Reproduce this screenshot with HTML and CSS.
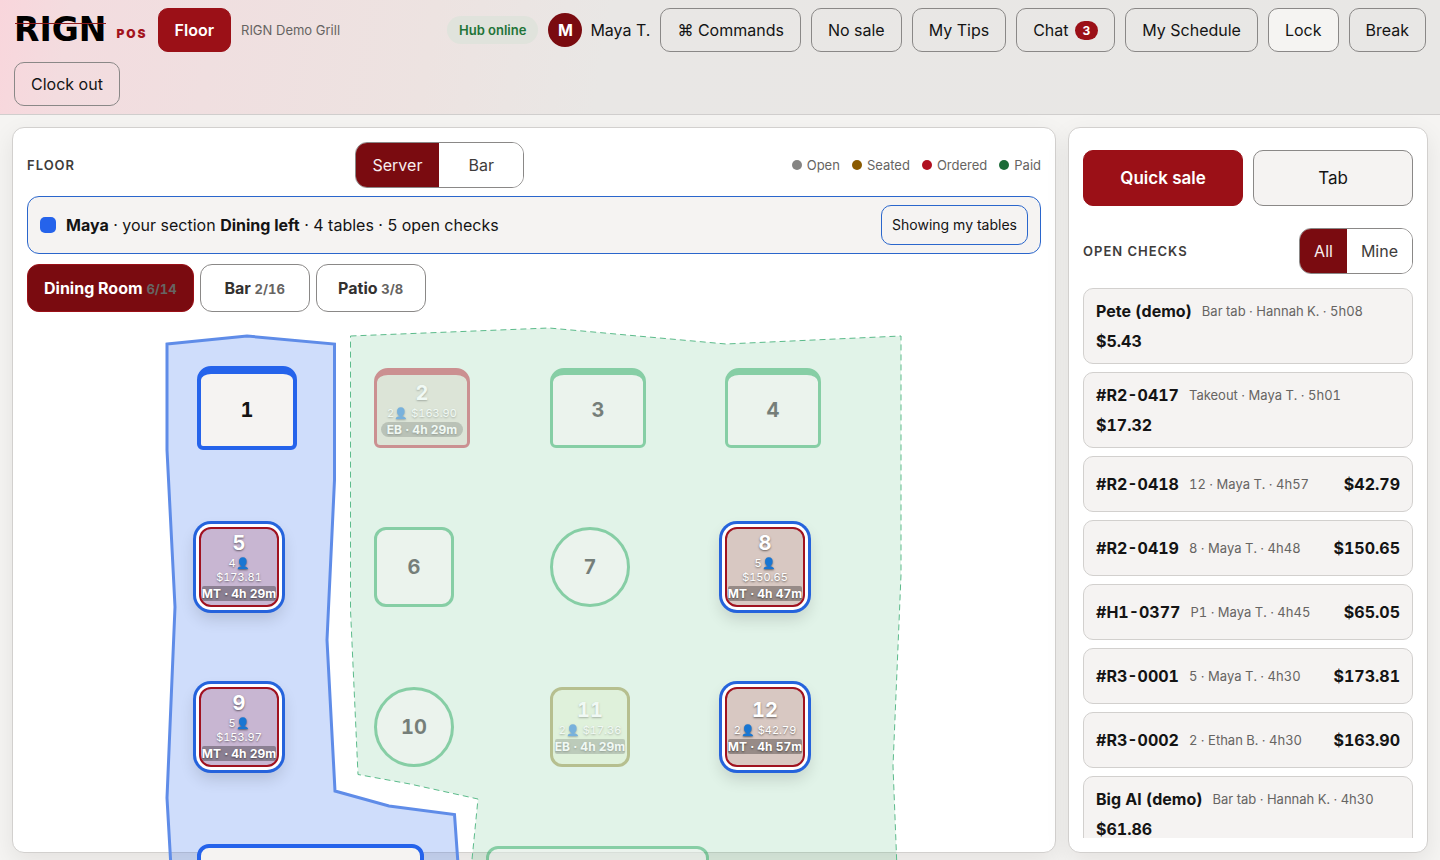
FILE: index.html
```html
<!DOCTYPE html>
<html lang="en">
<head>
<meta charset="utf-8">
<title>RIGN POS</title>
<link rel="stylesheet" href="styles.css">
</head>
<body>
<header class="topbar">
  <div class="brand"><span class="brand-word">RIGN</span><span class="brand-sub">POS</span></div>
  <button class="btn btn-primary">Floor</button>
  <span class="venue">RIGN Demo Grill</span>
  <span class="hub">Hub online</span>
  <div class="user"><span class="avatar">M</span><span>Maya T.</span></div>
  <button class="btn">⌘ Commands</button>
  <button class="btn">No sale</button>
  <button class="btn">My Tips</button>
  <button class="btn">Chat <span class="count">3</span></button>
  <button class="btn">My Schedule</button>
  <button class="btn btn-solid">Lock</button>
  <button class="btn">Break</button>
  <button class="btn">Clock out</button>
</header>
<main class="layout">
  <section class="panel floor">
    <div class="floor-head">
      <h2 class="heading">Floor</h2>
      <div class="segment segment-even"><button class="seg on">Server</button><button class="seg">Bar</button></div>
      <ul class="legend">
        <li><i class="dot dot-open"></i>Open</li>
        <li><i class="dot dot-seated"></i>Seated</li>
        <li><i class="dot dot-ordered"></i>Ordered</li>
        <li><i class="dot dot-paid"></i>Paid</li>
      </ul>
    </div>
    <div class="banner">
      <i class="swatch"></i>
      <p class="banner-text"><b>Maya</b> · your section <b>Dining left</b> · 4 tables · 5 open checks</p>
      <button class="btn-filter">Showing my tables</button>
    </div>
    <nav class="rooms">
      <button class="room on">Dining Room <small>6/14</small></button>
      <button class="room">Bar <small>2/16</small></button>
      <button class="room">Patio <small>3/8</small></button>
    </nav>
    <div class="stage">
      <svg class="zones" viewBox="0 0 740 600" aria-hidden="true">
        <path class="zone-mine" d="M3 24 83 16 170.500 24V160L163 320 171 471 225 486 290.500 494.500 298 600H10L3 478 11 287 3 130Z"/>
        <path class="zone-other" d="M186.500 16 385 8 562 24 737 16V255L729 446 735 600H302L314 479 246 464 194 454.500 186.500 290Z"/>
      </svg>
      <button class="table booth mine t1"><b class="num">1</b></button>
      <button class="table booth dim ordered t2"><b class="num">2</b><span class="info">2👤 $163.90</span><span class="timer">EB · 4h 29m</span></button>
      <button class="table booth dim t3"><b class="num">3</b></button>
      <button class="table booth dim t4"><b class="num">4</b></button>
      <button class="table busy violet t5"><b class="num">5</b><span class="info">4👤 $173.81</span><span class="timer">MT · 4h 29m</span></button>
      <button class="table dim t6"><b class="num">6</b></button>
      <button class="table round dim t7"><b class="num">7</b></button>
      <button class="table busy t8"><b class="num">8</b><span class="info">5👤 $150.65</span><span class="timer">MT · 4h 47m</span></button>
      <button class="table busy violet t9"><b class="num">9</b><span class="info">5👤 $153.97</span><span class="timer">MT · 4h 29m</span></button>
      <button class="table round dim t10"><b class="num">10</b></button>
      <button class="table dim seated t11"><b class="num">11</b><span class="info">2👤 $17.36</span><span class="timer">EB · 4h 29m</span></button>
      <button class="table busy t12"><b class="num">12</b><span class="info">2👤 $42.79</span><span class="timer">MT · 4h 57m</span></button>
      <button class="table mine t13" aria-label="Table 13"></button>
      <button class="table dim t14" aria-label="Table 14"></button>
    </div>
  </section>
  <aside class="panel side">
    <div class="actions"><button class="btn-big btn-primary">Quick sale</button><button class="btn-big">Tab</button></div>
    <div class="side-head">
      <h2 class="heading">Open checks</h2>
      <div class="segment segment-tight"><button class="seg on">All</button><button class="seg">Mine</button></div>
    </div>
    <div class="checks">
      <button class="check"><b>Pete (demo)</b><span class="meta">Bar tab · Hannah K. · 5h08</span><b>$5.43</b></button>
      <button class="check"><b>#R2-0417</b><span class="meta">Takeout · Maya T. · 5h01</span><b>$17.32</b></button>
      <button class="check"><b>#R2-0418</b><span class="meta">12 · Maya T. · 4h57</span><b>$42.79</b></button>
      <button class="check"><b>#R2-0419</b><span class="meta">8 · Maya T. · 4h48</span><b>$150.65</b></button>
      <button class="check"><b>#H1-0377</b><span class="meta">P1 · Maya T. · 4h45</span><b>$65.05</b></button>
      <button class="check"><b>#R3-0001</b><span class="meta">5 · Maya T. · 4h30</span><b>$173.81</b></button>
      <button class="check"><b>#R3-0002</b><span class="meta">2 · Ethan B. · 4h30</span><b>$163.90</b></button>
      <button class="check"><b>Big Al (demo)</b><span class="meta">Bar tab · Hannah K. · 4h30</span><b>$61.86</b></button>
    </div>
  </aside>
</main>
</body>
</html>
```
FILE: styles.css
```css
:root {
  --ink: #141414;
  --muted: #666462;
  --line: #8a8887;
  --soft-line: #d2d0ce;
  --surface: #f5f3f2;
  --red: #9b1017;
  --deep: #7a0b10;
  --blue: #2563eb;
  --green: #35ad68;
}
* { box-sizing: border-box; }
body {
  margin: 0;
  height: 100vh;
  overflow: hidden;
  display: flex;
  flex-direction: column;
  background: #f5f4f2;
  color: var(--ink);
  font: 16px/20px Inter, "Noto Sans", sans-serif;
}
button { font: inherit; color: inherit; cursor: pointer; }
h2, p, ul { margin: 0; padding: 0; }

.topbar {
  display: flex;
  flex-wrap: wrap;
  align-items: center;
  gap: 10px;
  padding: 8px 14px;
  border-bottom: 1px solid #d0cecd;
  background: linear-gradient(100deg, #f9d6dc 0%, #f3dcdf 5%, #f0dfe0 15%, #ede3e1 30%, #e9e7e5 42%, #e8e7e5 100%);
}
.brand { display: flex; align-items: center; gap: 10px; height: 44px; }
.brand-word {
  position: relative;
  font: 700 33px/46px "DejaVu Sans", sans-serif;
  color: #000;
}
.brand-word::after {
  content: "";
  position: absolute;
  left: 1px;
  right: 0;
  top: 16px;
  height: 1px;
  background: #8e1a1d;
}
.brand-sub {
  padding-top: 8px;
  font-size: 12px;
  font-weight: 900;
  letter-spacing: 2px;
  color: #a3131c;
}
.btn {
  display: flex;
  align-items: center;
  gap: 6px;
  height: 44px;
  padding: 0 16px;
  border: 1px solid var(--line);
  border-radius: 10px;
  background: transparent;
}
.btn-solid { background: #f5f4f2; }
.btn-primary, .btn-big.btn-primary {
  border-color: var(--red);
  background: var(--red);
  color: #fff;
  font-weight: 600;
}
.venue { margin-right: auto; font-size: 13px; color: var(--muted); }
.hub {
  padding: 4px 12px;
  border-radius: 14px;
  background: #e0e3dc;
  color: #1f7438;
  font-size: 13px;
  font-weight: 600;
}
.user { display: flex; align-items: center; gap: 8px; }
.avatar {
  width: 34px;
  border-radius: 50%;
  background: var(--deep);
  color: #fff;
  font-weight: 700;
  line-height: 34px;
  text-align: center;
}
.count {
  padding: 0 8px;
  border-radius: 10px;
  background: var(--red);
  color: #fff;
  font-size: 12px;
  font-weight: 700;
  line-height: 19px;
}

.layout {
  flex: 1;
  min-height: 0;
  display: grid;
  grid-template-columns: minmax(0, 1fr) 360px;
  gap: 12px;
  padding: 12px 12px 7px;
  overflow: hidden;
}
.panel {
  min-height: 0;
  display: flex;
  flex-direction: column;
  padding: 14px;
  border: 1px solid var(--soft-line);
  border-radius: 12px;
  background: #fff;
  box-shadow: 0 8px 24px rgba(20, 15, 10, 0.08);
}
.heading {
  font-size: 13px;
  font-weight: 600;
  letter-spacing: 1px;
  text-transform: uppercase;
  color: #3e3c3b;
}
.floor-head, .side-head { display: flex; align-items: center; justify-content: space-between; }
.floor-head .heading { margin-right: 12px; }
.segment {
  display: grid;
  grid-template-columns: auto auto;
  height: 46px;
  overflow: hidden;
  border: 1px solid var(--line);
  border-radius: 12px;
}
.segment-even { grid-template-columns: 1fr 1fr; }
.seg { padding: 0 17px; border: 0; background: #fff; color: #3e3c3b; }
.segment-tight .seg { padding: 0 14px; }
.seg.on { background: var(--deep); color: #f8eeee; }
.legend { display: flex; gap: 12px; list-style: none; font-size: 13px; color: var(--muted); }
.legend li { display: flex; align-items: center; gap: 5px; }
.dot { width: 10px; height: 10px; border-radius: 50%; }
.dot-open { background: #858483; }
.dot-seated { background: #8a5a00; }
.dot-ordered { background: #b01020; }
.dot-paid { background: #1c6b38; }

.banner {
  display: flex;
  align-items: center;
  gap: 10px;
  margin: 8px 0 10px;
  padding: 8px 12px;
  border: 1px solid #2a66cc;
  border-radius: 12px;
  background: var(--surface);
}
.swatch { width: 16px; height: 16px; border-radius: 5px; background: var(--blue); }
.banner-text { flex: 1; }
.btn-filter {
  height: 40px;
  padding: 0 10px;
  border: 1px solid #2a66cc;
  border-radius: 10px;
  background: transparent;
  font-size: 14px;
}
.rooms { display: flex; gap: 6px; }
.room {
  min-width: 110px;
  height: 48px;
  padding: 0 16px;
  border: 1px solid var(--line);
  border-radius: 12px;
  background: #fff;
  color: #333130;
  font-weight: 700;
}
.room small { font-size: 13px; color: var(--muted); font-variant-numeric: tabular-nums; }
.room.on { background: var(--deep); border-color: var(--red); color: #fff; }

.stage {
  position: relative;
  flex: none;
  width: 740px;
  height: 600px;
  margin: 8px auto 0;
}
.zones { display: block; width: 100%; }
.zone-mine { fill: rgba(37, 99, 235, 0.22); stroke: #5f8ce8; stroke-width: 3; }
.zone-other { fill: rgba(53, 173, 104, 0.15); stroke: #5cbb8b; stroke-width: 1; stroke-dasharray: 6 4; }

.table {
  position: absolute;
  display: flex;
  flex-direction: column;
  align-items: center;
  justify-content: center;
  width: 80px;
  height: 80px;
  padding: 0;
  border: 3px solid var(--green);
  border-radius: 12px;
  background: var(--surface);
  font-variant-numeric: tabular-nums;
}
.booth { width: 96px; border-top-width: 7px; border-radius: 14px 14px 6px 6px; }
.round { border-radius: 50%; }
.dim { opacity: 0.52; }
.mine { border-color: var(--blue); border-width: 4px; }
.mine.booth { width: 100px; height: 84px; border-top-width: 8px; }
.num { font-size: 20px; line-height: 20px; }
.info { padding: 3px 5px 2px; font-size: 11px; line-height: 14px; }
.timer {
  padding: 0 6px;
  border-radius: 8px;
  background: rgba(0, 0, 0, 0.3);
  font-size: 12px;
  font-weight: 700;
  line-height: 15px;
  white-space: nowrap;
}
.busy, .ordered, .seated { color: #fff; text-shadow: 0 1px 2px rgba(0, 0, 0, 0.5); }
.busy {
  overflow: hidden;
  border: 2px solid #a01220;
  background: #d8c8c2;
  box-shadow: 0 0 0 3px #fff, 0 0 0 6px #2563dc, 0 8px 16px 4px rgba(0, 0, 0, 0.14);
}
.busy .timer, .seated .timer { padding: 0; border-radius: 2px; }
.violet { background: #c8b6d2; }
.ordered { border-color: #b73742; background: #d8d8c9; }
.seated { border-color: #8f913f; background: #dff0d0; }

.t1 { left: 33px; top: 46px; }
.t2 { left: 210px; top: 48px; }
.t3 { left: 386px; top: 48px; }
.t4 { left: 561px; top: 48px; }
.t5 { left: 35px; top: 207px; }
.t6 { left: 210px; top: 207px; }
.t7 { left: 386px; top: 207px; }
.t8 { left: 561px; top: 207px; }
.t9 { left: 35px; top: 367px; }
.t10 { left: 210px; top: 367px; }
.t11 { left: 386px; top: 367px; }
.t12 { left: 561px; top: 367px; }
.t13 { left: 33px; top: 524px; width: 227px; }
.t14 { left: 322px; top: 526px; width: 223px; }

.actions { display: grid; grid-template-columns: 1fr 1fr; gap: 10px; margin: 8px 0 22px; }
.btn-big {
  height: 56px;
  border: 1px solid var(--line);
  border-radius: 10px;
  background: var(--surface);
  font-size: 17px;
}
.checks {
  flex: 1;
  min-height: 0;
  display: flex;
  flex-direction: column;
  gap: 8px;
  margin-top: 14px;
  overflow: hidden;
}
.check {
  flex: none;
  display: flex;
  flex-wrap: wrap;
  align-items: center;
  gap: 10px;
  min-height: 56px;
  padding: 12px;
  border: 1px solid var(--soft-line);
  border-radius: 10px;
  background: var(--surface);
  text-align: left;
  font-variant-numeric: tabular-nums;
}
.meta { flex: 1 1 auto; font-size: 13px; color: var(--muted); }
```
